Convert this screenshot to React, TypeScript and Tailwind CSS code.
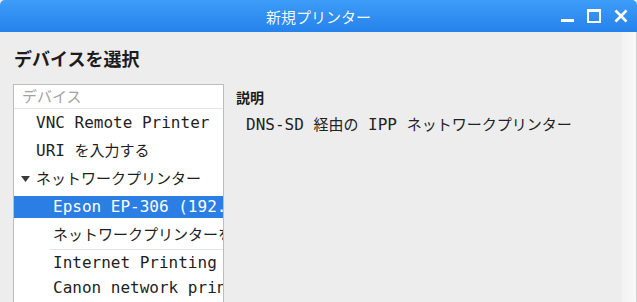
const mono = { fontFamily: '"DejaVu Sans Mono", "Noto Sans CJK JP", monospace' };

// CJK runs are drawn a touch smaller than the mono latin text, as in the GTK dialog
function MixedText({ text }: { text: string }) {
  const parts = text.split(/([\u3000-\u30ff\u4e00-\u9fff]+)/);
  return (
    <span className="whitespace-pre">
      {parts.map((p, i) =>
        /[\u3000-\u30ff\u4e00-\u9fff]/.test(p) ? (
          <span key={i} className="text-[15px]" style={{ fontFamily: '"Noto Sans CJK JP", sans-serif' }}>
            {p}
          </span>
        ) : (
          p
        )
      )}
    </span>
  );
}

type Row = { label: string; indent: number; expander?: boolean; selected?: boolean; sepAbove?: boolean; h: number };

const rows: Row[] = [
  { label: 'VNC Remote Printer', indent: 22, h: 28 },
  { label: 'URI を入力する', indent: 22, h: 28 },
  { label: 'ネットワークプリンター', indent: 22, expander: true, h: 28 },
  { label: 'Epson EP-306 (192.168.1.20)', indent: 39, selected: true, h: 28 },
  { label: 'ネットワークプリンターを検索', indent: 39, h: 28 },
  { label: 'Internet Printing Protocol (ipp)', indent: 39, sepAbove: true, h: 25 },
  { label: 'Canon network printer', indent: 39, h: 26 },
  { label: 'AppSocket/HP JetDirect', indent: 39, h: 26 },
];

function TitleBar() {
  return (
    <div className="relative h-8 shrink-0 rounded-t-[5px] bg-gradient-to-b from-[#3d9df8] to-[#2582ec] flex items-center justify-center">
      <span className="text-[15px] text-white/95 leading-none" style={{ fontFamily: '"Noto Sans CJK JP", sans-serif' }}>
        新規プリンター
      </span>
      {/* window controls */}
      <div className="absolute right-[9px] top-0 h-8 flex items-center">
        <div className="w-[13px] h-[14px] mr-[13px] flex items-end">
          <div className="w-[13px] h-[3px] bg-white mb-[1px]" />
        </div>
        <div className="w-[14px] h-[14px] border-2 border-white border-t-[3px] mr-[13px]" />
        <svg width="14" height="14" viewBox="0 0 14 14">
          <path d="M1.5 1.5 L12.5 12.5 M12.5 1.5 L1.5 12.5" stroke="white" strokeWidth="2.6" />
        </svg>
      </div>
    </div>
  );
}

function DeviceTree() {
  return (
    <div className="w-[211px] border border-[#bdbdbd] border-b-0 bg-white overflow-hidden flex flex-col" style={mono}>
      <div
        className="h-[24px] shrink-0 border-b border-[#e3e3e3] flex items-center pl-[8px] text-[15px] text-[#a3a3a3]"
        style={{ fontFamily: '"Noto Sans CJK JP", sans-serif' }}
      >
        デバイス
      </div>
      {rows.map((r, i) => (
        <div key={i} className="relative shrink-0 flex flex-col" style={{ height: r.h }}>
          {r.sepAbove && <div className="absolute top-0 left-[36px] right-0 h-px bg-[#e4e4e4]" />}
          <div
            className={`mt-[3px] h-[22px] flex items-center whitespace-nowrap text-[16px] ${
              r.selected ? 'bg-[#2b7ee4] text-white' : 'text-[#1e1e1e]'
            }`}
            style={{ paddingLeft: r.indent }}
          >
            {r.expander && (
              <svg width="9" height="6" viewBox="0 0 9 6" className="absolute left-[7px] top-[11px]">
                <path d="M0 0 L9 0 L4.5 6 Z" fill="#3a3a3a" />
              </svg>
            )}
            <MixedText text={r.label} />
          </div>
        </div>
      ))}
    </div>
  );
}

export default function App() {
  return (
    <div className="w-[637px] h-[302px] overflow-hidden flex flex-col bg-[#ededed]">
      <TitleBar />
      <div className="flex-1 flex min-h-0">
        <div className="flex-1 flex flex-col pl-[13px] pt-[14px] min-w-0">
          <h1
            className="h-[24px] pl-px text-[18px] font-bold leading-[24px] text-[#1c1c1c]"
            style={{ fontFamily: '"Noto Sans CJK JP", sans-serif' }}
          >
            デバイスを選択
          </h1>
          <div className="flex-1 flex mt-[14px] min-h-0">
            <DeviceTree />
            <div className="ml-[12px] flex flex-col pt-[3px]">
              <div
                className="text-[14px] font-bold leading-[20px] text-[#1c1c1c]"
                style={{ fontFamily: '"Noto Sans CJK JP", sans-serif' }}
              >
                説明
              </div>
              <div className="mt-[7px] pl-[10px] text-[16px] leading-[20px] text-[#222] whitespace-nowrap" style={mono}>
                <MixedText text="DNS-SD 経由の IPP ネットワークプリンター" />
              </div>
            </div>
          </div>
        </div>
        <div className="w-[15px] bg-gradient-to-r from-[#f3f3f3] to-[#f8f8f8] border-r border-[#cfcfcf]" />
      </div>
    </div>
  );
}
